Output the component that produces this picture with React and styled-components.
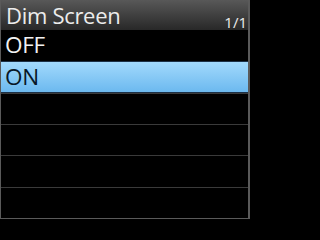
import styled, { createGlobalStyle } from "styled-components";

const GlobalStyle = createGlobalStyle`
  html, body {
    margin: 0;
    padding: 0;
    background: #000;
  }
`;

const items = [
  { label: "OFF" },
  { label: "ON", selected: true },
  { label: "" },
  { label: "" },
  { label: "" },
  { label: "" },
];

function App() {
  return (
    <>
      <GlobalStyle />
      <Screen>
        <Header>
          <Title>Dim Screen</Title>
          <PageNo>1/1</PageNo>
        </Header>
        {items.map((item, i) => (
          <Row key={i} $selected={item.selected}>
            {item.label}
          </Row>
        ))}
      </Screen>
    </>
  );
}

const Screen = styled.div`
  width: 250px;
  height: 219px;
  box-sizing: border-box;
  display: grid;
  grid-template-rows: 30px repeat(6, minmax(0, 1fr));
  background: #000;
  border: 1px solid #5a5a5a;
  border-top: none;
  border-right-width: 2px;
  font-family: "Open Sans", "Noto Sans", sans-serif;
`;

const Header = styled.div`
  display: flex;
  justify-content: space-between;
  padding: 0 1px 0 5px;
  background: linear-gradient(#585858, #282828);
  color: #ececec;
`;

const Title = styled.span`
  font-size: 22px;
  line-height: 30px;
  letter-spacing: -0.3px;
`;

const PageNo = styled.span`
  align-self: flex-end;
  font-size: 15px;
  line-height: 15px;
`;

const Row = styled.div`
  display: flex;
  align-items: center;
  min-height: 0;
  padding-left: 4px;
  font-size: 22.5px;
  line-height: 1;
  letter-spacing: -0.3px;
  color: ${(p) => (p.$selected ? "#081828" : "#f2f2f2")};
  border-top: 1px solid ${(p) => (p.$selected ? "#1c3046" : "#3a3a3a")};
  border-bottom: ${(p) => (p.$selected ? "1px solid #1c3046" : "none")};
  background: ${(p) =>
    p.$selected ? "linear-gradient(#a2d9fc, #6cb9ef)" : "#000"};
  &:nth-child(2) {
    border-top: none;
  }
`;

export default App;
